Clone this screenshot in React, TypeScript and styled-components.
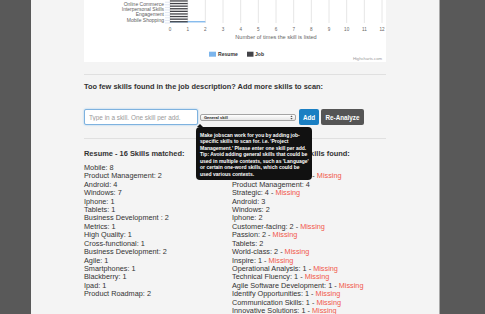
import React from 'react';
import styled, { createGlobalStyle } from 'styled-components';

const GlobalStyle = createGlobalStyle`
  html, body {
    margin: 0;
    padding: 0;
  }
  body {
    background: #595959;
    font-family: 'Liberation Sans', Arial, sans-serif;
    color: #333;
  }
`;

const Page = styled.div`
  display: flex;
  height: 314px;
  overflow: hidden;
`;

const Gutter = styled.div`
  width: 31px;
  flex-shrink: 0;
`;

const Main = styled.main`
  width: 409px;
  flex-shrink: 0;
  box-sizing: border-box;
  padding-left: 53px;
  background: #f4f4f4;
  border-right: 1px solid #a9a9a9;
`;

const Content = styled.div`
  width: 302px;
`;

const ChartCard = styled.div`
  height: 62px;
  background: #fff;

  svg {
    display: block;
    font-family: 'Liberation Sans', Arial, sans-serif;
  }
`;

const Rule = styled.hr<{ $top: number }>`
  height: 0;
  margin: ${(p) => p.$top}px 0 0;
  border: 0;
  border-top: 1px solid #e0e0e0;
`;

const Prompt = styled.h3`
  margin: 7px 0 0;
  font-size: 7.4px;
  line-height: 10px;
  font-weight: bold;
  white-space: nowrap;
`;

const InputRow = styled.div`
  position: relative;
  display: flex;
  align-items: center;
  height: 16px;
  margin-top: 17px;
`;

const SkillInput = styled.input`
  width: 114px;
  height: 16px;
  box-sizing: border-box;
  padding: 0 0 0 4px;
  border: 1px solid #7eb2df;
  border-radius: 2px;
  box-shadow: 0 0 2px rgba(82, 168, 236, 0.6);
  background: #fff;
  font-family: inherit;
  font-size: 6.4px;
  outline: none;

  &::placeholder {
    color: #9a9a9a;
  }
`;

const SkillSelect = styled.div`
  display: flex;
  align-items: center;
  justify-content: space-between;
  width: 96px;
  height: 7px;
  box-sizing: border-box;
  margin-left: 2px;
  padding: 0 2px 0 3px;
  border: 1px solid #a5a5a5;
  border-radius: 2px;
  background: linear-gradient(#ffffff, #e6e6e6);
  font-size: 4px;
  font-weight: bold;
  color: #222;
`;

const Button = styled.button<{ $dark?: boolean; $width: number }>`
  width: ${(p) => p.$width}px;
  height: 16px;
  margin-left: ${(p) => (p.$dark ? 2 : 3)}px;
  padding: 0;
  border: 0;
  border-radius: 2px;
  background: ${(p) => (p.$dark ? '#555555' : '#1a7fc3')};
  color: #fff;
  font-family: inherit;
  font-size: 6.3px;
  font-weight: bold;
`;

const Tooltip = styled.div`
  position: absolute;
  left: 112px;
  top: 18px;
  z-index: 2;
  width: 116px;
  box-sizing: border-box;
  padding: 4.5px 4px 2.5px;
  border-radius: 4px;
  background: #111;
  color: #fff;
  font-size: 5px;
  font-weight: bold;
  line-height: 6.5px;
  white-space: nowrap;

  &::before {
    content: '';
    position: absolute;
    top: -3px;
    left: 1px;
    border-left: 3px solid transparent;
    border-right: 3px solid transparent;
    border-bottom: 3px solid #111;
  }
`;

const Columns = styled.div`
  display: grid;
  grid-template-columns: 148px 1fr;
  margin-top: 10px;
`;

const ColumnTitle = styled.h4`
  margin: 0 0 4.8px;
  font-size: 7.45px;
  line-height: 10px;
  font-weight: bold;
  white-space: nowrap;
`;

const SkillList = styled.ul`
  margin: 0;
  padding: 0;
  list-style: none;
`;

const SkillItem = styled.li`
  font-size: 7.3px;
  line-height: 8.43px;
  white-space: nowrap;
`;

const Missing = styled.span`
  color: #f1584b;
`;

const UNIT = 212 / 12;
const X0 = 86;
const labels = ['Online Commerce', 'Interpersonal Skills', 'Engagement', 'Mobile Shopping'];

function SkillChart() {
  const ticks = Array.from({ length: 13 }, (_, i) => i);
  const stripes = Array.from({ length: 9 }, (_, k) => 0.3 + k * 2.6);
  return (
    <svg width={302} height={62}>
      {ticks.map((i) => (
        <line key={i} x1={X0 + i * UNIT} x2={X0 + i * UNIT} y1={0} y2={23} stroke="#e6e6e6" strokeWidth={1} />
      ))}
      {stripes.map((y, k) => (
        <line key={k} x1={81} x2={86} y1={y + 1.9} y2={y + 1.9} stroke="#ccd6eb" strokeWidth={0.6} />
      ))}
      <rect x={X0} y={21.1} width={UNIT * 2} height={1.3} fill="#7cb5ec" />
      {stripes.map((y, k) => (
        <rect key={k} x={X0} y={y} width={UNIT} height={1.3} fill="#434348" />
      ))}
      {labels.map((l, i) => (
        <text key={l} x={80} y={5.7 + i * 5.33} fontSize={5} fill="#606060" textAnchor="end">
          {l}
        </text>
      ))}
      {ticks.map((i) => (
        <text key={i} x={X0 + i * UNIT} y={31} fontSize={4.6} fill="#666" textAnchor="middle">
          {i}
        </text>
      ))}
      <text x={192} y={39.3} fontSize={5.6} fill="#666" textAnchor="middle">
        Number of times the skill is listed
      </text>
      <rect x={125} y={51.7} width={7} height={5} fill="#7cb5ec" />
      <text x={134} y={56.3} fontSize={5.1} fontWeight="bold" fill="#333">
        Resume
      </text>
      <rect x={163} y={51.7} width={6.5} height={5} fill="#434348" />
      <text x={171} y={56.3} fontSize={5.1} fontWeight="bold" fill="#333">
        Job
      </text>
      <text x={298} y={59.5} fontSize={4.2} fill="#999" textAnchor="end">
        Highcharts.com
      </text>
    </svg>
  );
}

type Skill = { name: string; count: number; missing?: boolean };

const resumeSkills: Skill[] = [
  { name: 'Mobile', count: 8 },
  { name: 'Product Management', count: 2 },
  { name: 'Android', count: 4 },
  { name: 'Windows', count: 7 },
  { name: 'Iphone', count: 1 },
  { name: 'Tablets', count: 1 },
  { name: 'Business Development ', count: 2 },
  { name: 'Metrics', count: 1 },
  { name: 'High Quality', count: 1 },
  { name: 'Cross-functional', count: 1 },
  { name: 'Business Development', count: 2 },
  { name: 'Agile', count: 1 },
  { name: 'Smartphones', count: 1 },
  { name: 'Blackberry', count: 1 },
  { name: 'Ipad', count: 1 },
  { name: 'Product Roadmap', count: 2 },
];

const jobSkills: Skill[] = [
  { name: 'Mobile', count: 8 },
  { name: 'Customer Experience', count: 7, missing: true },
  { name: 'Product Management', count: 4 },
  { name: 'Strategic', count: 4, missing: true },
  { name: 'Android', count: 3 },
  { name: 'Windows', count: 2 },
  { name: 'Iphone', count: 2 },
  { name: 'Customer-facing', count: 2, missing: true },
  { name: 'Passion', count: 2, missing: true },
  { name: 'Tablets', count: 2 },
  { name: 'World-class', count: 2, missing: true },
  { name: 'Inspire', count: 1, missing: true },
  { name: 'Operational Analysis', count: 1, missing: true },
  { name: 'Technical Fluency', count: 1, missing: true },
  { name: 'Agile Software Development', count: 1, missing: true },
  { name: 'Identify Opportunities', count: 1, missing: true },
  { name: 'Communication Skills', count: 1, missing: true },
  { name: 'Innovative Solutions', count: 1, missing: true },
];

function Skills({ items }: { items: Skill[] }) {
  return (
    <SkillList>
      {items.map((s, i) => (
        <SkillItem key={i}>
          {s.name}: {s.count}
          {s.missing && (
            <>
              {' - '}
              <Missing>Missing</Missing>
            </>
          )}
        </SkillItem>
      ))}
    </SkillList>
  );
}

function SelectArrows() {
  return (
    <svg width={3} height={5} viewBox="0 0 3 5">
      <path d="M0.3 2 L1.5 0.6 L2.7 2 Z M0.3 3 L1.5 4.4 L2.7 3 Z" fill="#555" />
    </svg>
  );
}

export default function App() {
  return (
    <>
      <GlobalStyle />
      <Page>
        <Gutter />
        <Main>
          <Content>
            <ChartCard>
              <SkillChart />
            </ChartCard>
            <Rule $top={12} />
            <Prompt>Too few skills found in the job description? Add more skills to scan:</Prompt>
            <InputRow>
              <SkillInput placeholder="Type in a skill. One skill per add." />
              <SkillSelect>
                <span>General skill</span>
                <SelectArrows />
              </SkillSelect>
              <Button $width={20}>Add</Button>
              <Button $width={43} $dark>
                Re-Analyze
              </Button>
              <Tooltip>
                Make jobscan work for you by adding job-
                <br />
                specific skills to scan for. i.e. 'Project
                <br />
                Management.' Please enter one skill per add.
                <br />
                Tip: Avoid adding general skills that could be
                <br />
                used in multiple contexts, such as 'Language'
                <br />
                or certain one-word skills, which could be
                <br />
                used various contexts.
              </Tooltip>
            </InputRow>
            <Rule $top={13} />
            <Columns>
              <div>
                <ColumnTitle>Resume - 16 Skills matched:</ColumnTitle>
                <Skills items={resumeSkills} />
              </div>
              <div>
                <ColumnTitle>Job Description - 26 Skills found:</ColumnTitle>
                <Skills items={jobSkills} />
              </div>
            </Columns>
          </Content>
        </Main>
      </Page>
    </>
  );
}
